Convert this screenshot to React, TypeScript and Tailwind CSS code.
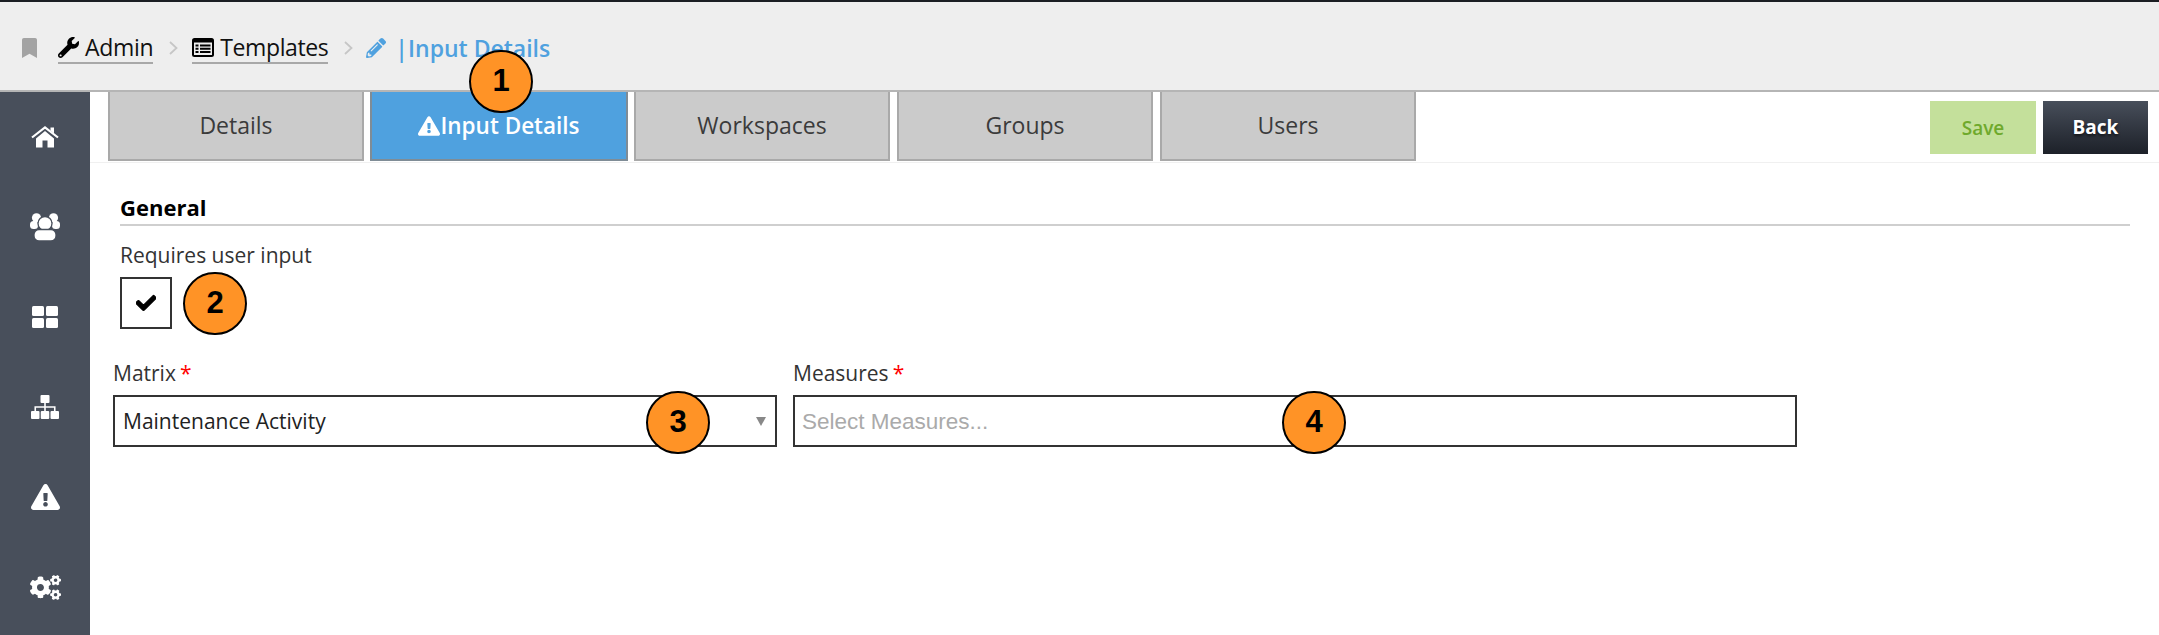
import React from 'react';
import { FaBookmark, FaCheck, FaCogs, FaExclamationTriangle, FaPencilAlt, FaWrench } from 'react-icons/fa';

const Callout: React.FC<{ n: number; className: string }> = ({ n, className }) => (
  <div
    className={`absolute flex h-[63px] w-[64px] items-center justify-center rounded-full border-2 border-black bg-[#ff9326] font-['Liberation_Sans',sans-serif] text-[31px] font-bold text-black ${className}`}
  >
    {n}
  </div>
);

const Chevron: React.FC = () => (
  <svg viewBox="0 0 9 14" className="ml-[16px] h-[14px] w-[9px]" fill="none" stroke="#c6c6c6" strokeWidth="1.8">
    <path d="M1 1l6.5 6L1 13" />
  </svg>
);

const ListIcon: React.FC = () => (
  <svg viewBox="0 0 22 19" className="h-[19px] w-[22px]">
    <rect width="22" height="19" rx="2.5" fill="#000" />
    <rect x="2" y="4.5" width="18" height="12.5" fill="#eee" />
    <path d="M3.5 6.5h3v2h-3zM8 6.5h10.5v2H8zM3.5 9.8h3v2h-3zM8 9.8h10.5v2H8zM3.5 13h3v2h-3zM8 13h10.5v2H8z" fill="#000" />
  </svg>
);

const HomeIcon: React.FC = () => (
  <svg viewBox="0 0 28 22" className="h-[22px] w-[28px]" fill="#fff">
    <path d="M5 12.5L14 5l9 7.5V21.500h-6.500v-7h-5v7H5z" />
    <path d="M19.500 1.500H23v6l-3.500-3z" />
    <path d="M1 11.500L14 1.500l13 10" fill="none" stroke="#fff" strokeWidth="2.200" />
  </svg>
);

const UsersIcon: React.FC = () => (
  <svg viewBox="0 0 30 28" className="h-[28px] w-[30px]" fill="#fff" stroke="#484f5b">
    <circle cx="6.500" cy="4.800" r="4.600" strokeWidth="0" />
    <circle cx="23.500" cy="4.800" r="4.600" strokeWidth="0" />
    <rect x="0" y="8" width="8" height="8" rx="3.500" strokeWidth="0" />
    <rect x="22" y="8" width="8" height="8" rx="3.500" strokeWidth="0" />
    <circle cx="15" cy="10.500" r="7" strokeWidth="1.300" />
    <rect x="4" y="16.500" width="22" height="11.500" rx="5" strokeWidth="1.300" />
  </svg>
);

const GridIcon: React.FC = () => (
  <svg viewBox="0 0 26 22" className="h-[22px] w-[26px]" fill="#fff">
    <rect width="12" height="10" rx="1.500" />
    <rect x="14" width="12" height="10" rx="1.500" />
    <rect y="12" width="12" height="10" rx="1.500" />
    <rect x="14" y="12" width="12" height="10" rx="1.500" />
  </svg>
);

const SitemapIcon: React.FC = () => (
  <svg viewBox="0 0 28 24" className="h-[24px] w-[28px]" fill="#fff">
    <rect x="9.500" width="9" height="8" rx="1" />
    <rect y="16" width="8.500" height="8" rx="1" />
    <rect x="9.750" y="16" width="8.500" height="8" rx="1" />
    <rect x="19.500" y="16" width="8.500" height="8" rx="1" />
    <path d="M14 8v8M4.250 16v-4h19.500v4" fill="none" stroke="#fff" strokeWidth="1.600" />
  </svg>
);

const navItems = [
  <HomeIcon key="home" />,
  <UsersIcon key="users" />,
  <GridIcon key="grid" />,
  <SitemapIcon key="sitemap" />,
  <FaExclamationTriangle key="warning" className="h-[26px] w-[29px]" />,
  <FaCogs key="cogs" className="h-[27px] w-[31px]" />,
];
const tabs = ['Details', 'Input Details', 'Workspaces', 'Groups', 'Users'];

const App: React.FC = () => {
  return (
    <div className="relative flex h-[635px] w-[2159px] flex-col overflow-hidden bg-white font-['Open_Sans',sans-serif]">
      {/* Breadcrumb */}
      <header className="flex h-[92px] items-center border-t-2 border-b-2 border-t-[#1b1e23] border-b-[#b5b5b5] bg-[#eeeeee] pt-[4px] pl-[21px] text-[23px] tracking-[-0.3px] text-[#111111]">
        <FaBookmark className="h-[20px] w-[17px] text-[#a3a3a3]" />
        <a className="ml-[20px] flex h-[32px] items-center gap-[6px] border-b-2 border-[#a8a8a8]">
          <FaWrench className="h-[21px] w-[21px] text-black" />
          <span>Admin</span>
        </a>
        <Chevron />
        <a className="ml-[14px] flex h-[32px] items-center gap-[6px] border-b-2 border-[#a8a8a8]">
          <ListIcon />
          <span className="tracking-[-0.4px]">Templates</span>
        </a>
        <Chevron />
        <FaPencilAlt className="ml-[13px] h-[20px] w-[20px] text-[#4fa1df]" />
        <span className="ml-[9px] font-semibold tracking-normal text-[#4fa1df]">|Input Details</span>
      </header>

      <div className="flex flex-1">
        <nav className="flex w-[90px] flex-col items-center bg-[#484f5b] text-white">
          {navItems.map((item, i) => (
            <div key={i} className="flex h-[90px] w-full items-center justify-center">
              {item}
            </div>
          ))}
        </nav>

        <main className="flex-1">
          {/* Tabs and actions */}
          <div className="flex h-[71px] border-b border-[#f0f0f0] pl-[18px]">
            <div className="flex h-[69px] gap-[7px]">
              {tabs.map((tab, i) => (
                <div
                  key={tab}
                  className={`flex items-center justify-center border-x-2 border-b-2 ${
                    i === 1
                      ? '-mx-px w-[258px] border-[#7f8c96] bg-[#4fa1df] text-[22.500px] font-semibold text-white'
                      : 'w-[256px] border-[#a9a9a9] bg-[#cbcbcb] text-[23px] text-[#3b3b3b]'
                  }`}
                >
                  {i === 1 && <FaExclamationTriangle className="h-[20px] w-[22px]" />}
                  {tab}
                </div>
              ))}
            </div>
            <div className="ml-auto flex gap-[7px] pt-[9px] pr-[11px]">
              <button className="h-[53px] w-[106px] bg-[#c4e09b] pt-[2px] text-[19px] font-semibold text-[#6fa92c]">Save</button>
              <button className="h-[53px] w-[105px] bg-gradient-to-b from-[#484f5b] to-[#1d2129] text-[19px] font-bold text-white [text-shadow:0_2px_3px_rgba(0,0,0,0.6)]">Back</button>
            </div>
          </div>

          {/* Form */}
          <div className="pt-[30px] pl-[23px]">
            <div className="mr-[29px] ml-[7px] h-[33px] border-b-2 border-[#cfcfcf] text-[22px] leading-[28px] font-bold text-black">General</div>
            <label className="mt-[15px] ml-[7px] block text-[21px] leading-[28px] text-[#333333]">Requires user input</label>
            <div className="mt-[8px] ml-[7px] flex h-[52px] w-[52px] items-center justify-center border-2 border-[#333333]">
              <FaCheck className="h-[20px] w-[20px] text-black" stroke="currentColor" strokeWidth={30} />
            </div>
            <div className="mt-[30px] flex gap-[16px]">
              <div className="w-[664px]">
                <div className="h-[36px] text-[21px] leading-[28px] text-[#333333]">
                  Matrix<span className="ml-[4px] text-[#ff0000]">*</span>
                </div>
                <div className="flex h-[52px] items-center justify-between border-2 border-[#333333] pt-[1px] pr-[9px] pl-[8px] text-[21px] text-[#222222]">
                  Maintenance Activity
                  <span className="h-0 w-0 border-x-[5px] border-t-[9px] border-x-transparent border-t-[#888888]" />
                </div>
              </div>
              <div className="w-[1004px]">
                <div className="h-[36px] text-[21px] leading-[28px] text-[#333333]">
                  Measures<span className="ml-[4px] text-[#ff0000]">*</span>
                </div>
                <div className="flex h-[52px] items-center border-2 border-[#333333] pt-[1px] pl-[7px] font-['Liberation_Sans',sans-serif] text-[22.500px] text-[#aaaaaa]">
                  Select Measures...
                </div>
              </div>
            </div>
          </div>
        </main>
      </div>

      {/* Numbered callouts over the form */}
      <Callout n={1} className="top-[50px] left-[469px]" />
      <Callout n={2} className="top-[272px] left-[183px]" />
      <Callout n={3} className="top-[391px] left-[646px]" />
      <Callout n={4} className="top-[391px] left-[1282px]" />
    </div>
  );
};

export default App;
